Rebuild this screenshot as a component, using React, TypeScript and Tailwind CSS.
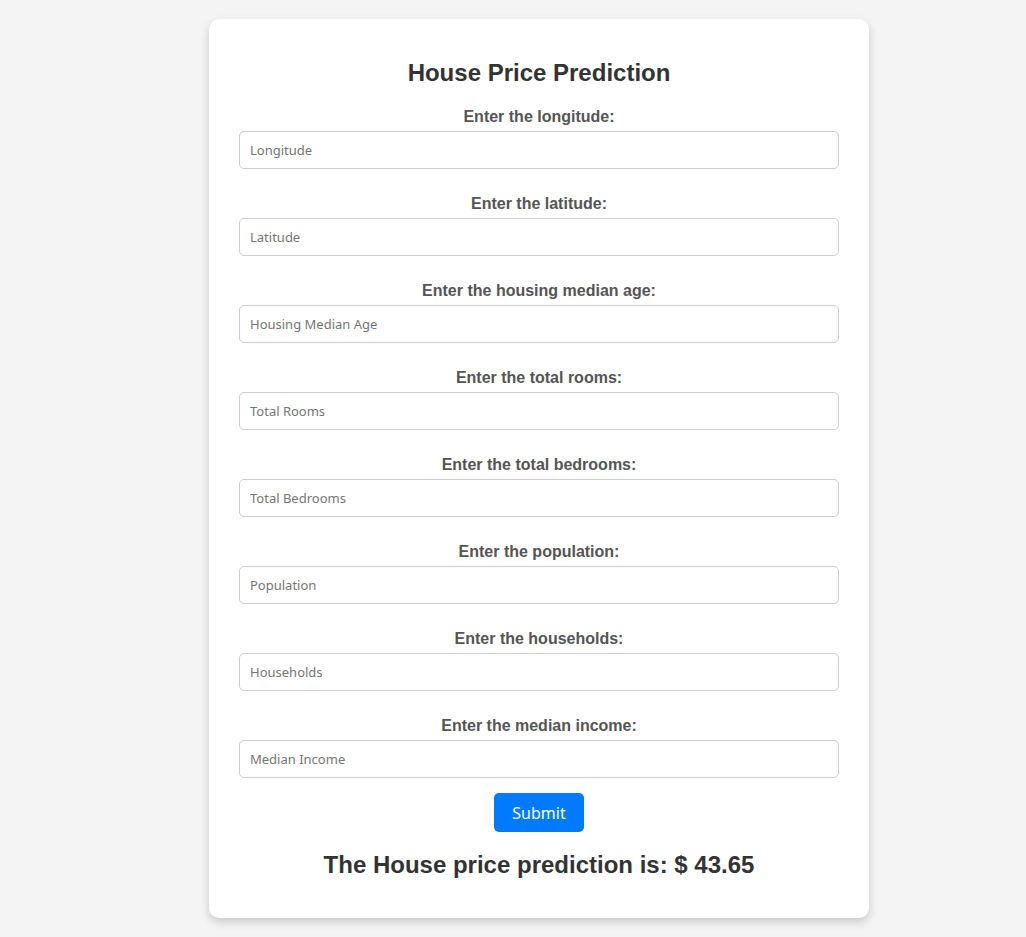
const fields = [
  { label: "Enter the longitude:", placeholder: "Longitude" },
  { label: "Enter the latitude:", placeholder: "Latitude" },
  { label: "Enter the housing median age:", placeholder: "Housing Median Age" },
  { label: "Enter the total rooms:", placeholder: "Total Rooms" },
  { label: "Enter the total bedrooms:", placeholder: "Total Bedrooms" },
  { label: "Enter the population:", placeholder: "Population" },
  { label: "Enter the households:", placeholder: "Households" },
  { label: "Enter the median income:", placeholder: "Median Income" },
];

const App = () => {
  return (
    <div className="min-h-[937px] bg-[#f4f4f4] pt-[19px] pb-[19px] font-['Liberation_Sans',Arial,sans-serif]">
      <div className="ml-[209px] w-[660px] rounded-[10px] bg-white px-[30px] pt-[40px] pb-[39px] shadow-[0_4px_10px_rgba(0,0,0,0.18)]">
        <h1 className="text-center text-[24px] font-bold leading-[28px] text-[#333]">
          House Price Prediction
        </h1>
        <form className="mt-[21px] flex flex-col">
          {fields.map((f, i) => (
            <div key={f.placeholder} className={i === 0 ? "" : "mt-[26px]"}>
              <label className="block text-center text-[16px] font-bold leading-[18px] text-[#555]">
                {f.label}
              </label>
              <input
                type="text"
                placeholder={f.placeholder}
                className="mt-[5px] block h-[38px] w-full rounded-[5px] border border-[#ccc] px-[10px] font-['Noto_Sans',sans-serif] text-[13px] text-[#333] placeholder:text-[#757575] outline-none"
              />
            </div>
          ))}
          <button
            type="button"
            className="mx-auto mt-[15px] h-[39px] w-[90px] rounded-[5px] bg-[#007bff] font-['Noto_Sans',sans-serif] text-[16px] text-white"
          >
            Submit
          </button>
        </form>
        <h2 className="mt-[19px] text-center text-[24px] font-bold leading-[28px] text-[#333]">
          The House price prediction is: $ 43.65
        </h2>
      </div>
    </div>
  );
};

export default App;
